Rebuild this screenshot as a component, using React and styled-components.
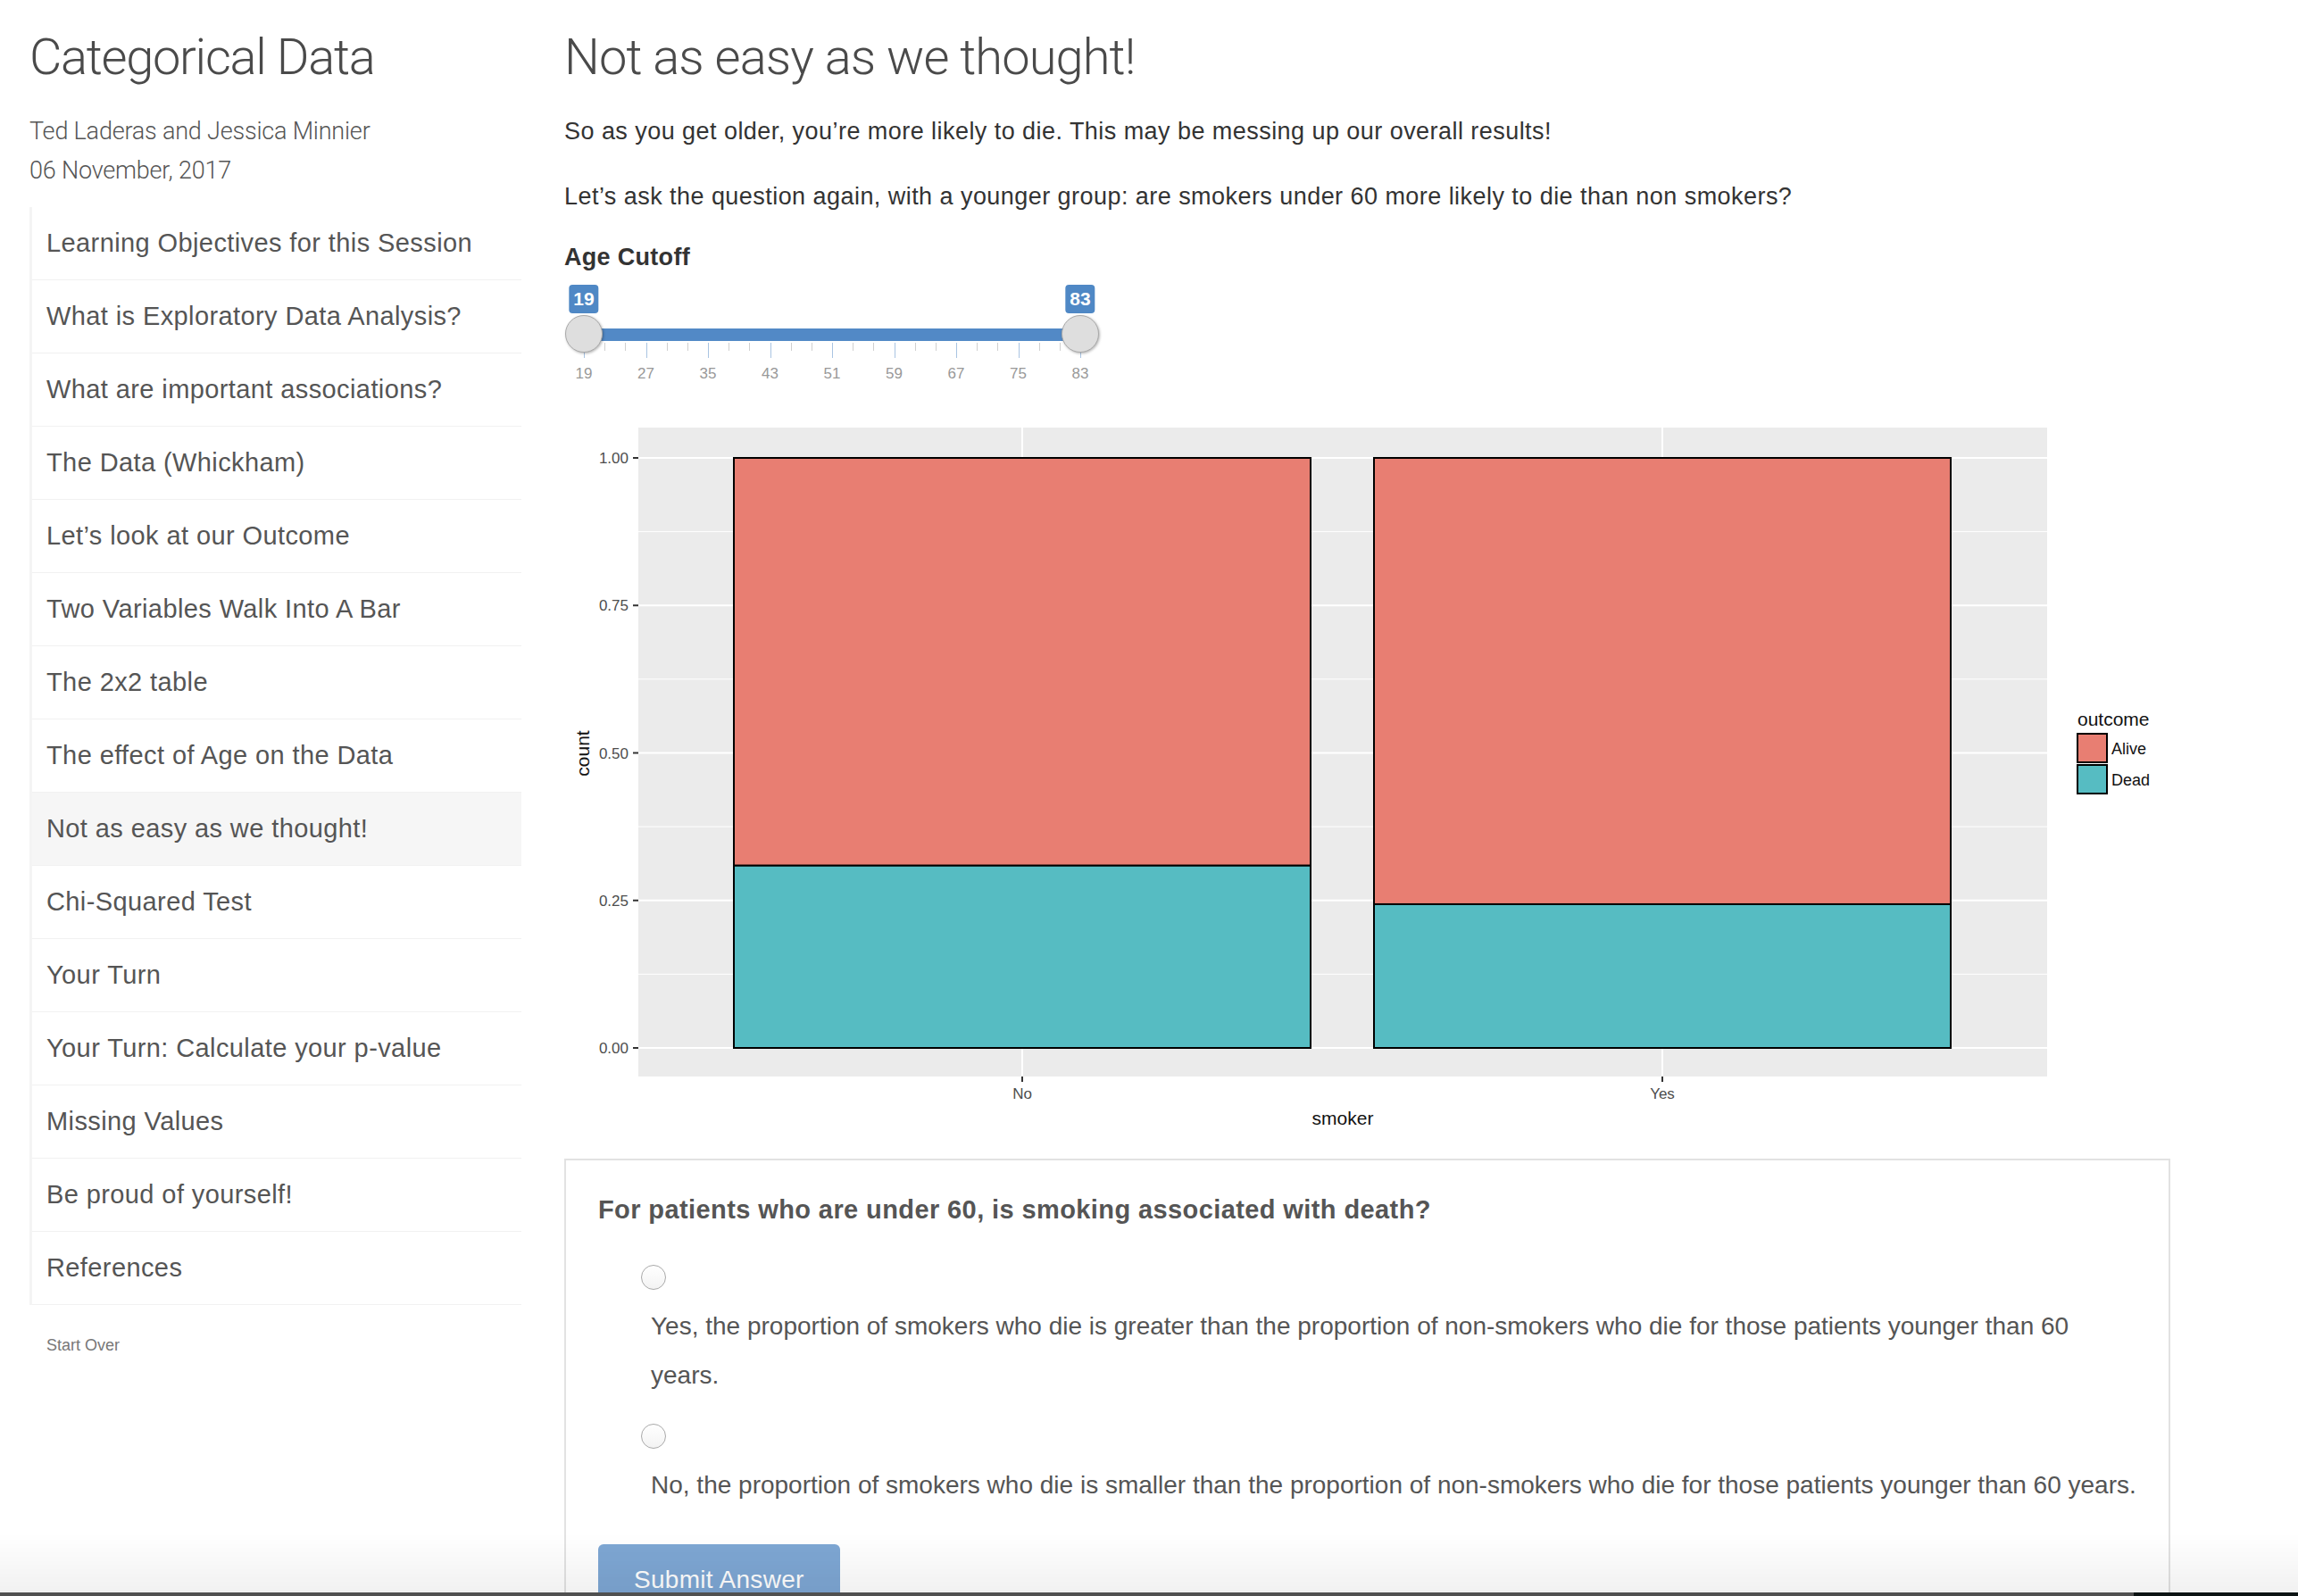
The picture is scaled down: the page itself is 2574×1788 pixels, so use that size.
import React from 'react';
import styled, { createGlobalStyle } from 'styled-components';

const GlobalStyle = createGlobalStyle`
  html, body {
    margin: 0;
    padding: 0;
    background: #fff;
  }
  body {
    font-family: 'Liberation Sans', Arial, sans-serif;
    color: #333;
  }
`;

const sections = [
    'Learning Objectives for this Session',
    'What is Exploratory Data Analysis?',
    'What are important associations?',
    'The Data (Whickham)',
    'Let’s look at our Outcome',
    'Two Variables Walk Into A Bar',
    'The 2x2 table',
    'The effect of Age on the Data',
    'Not as easy as we thought!',
    'Chi-Squared Test',
    'Your Turn',
    'Your Turn: Calculate your p-value',
    'Missing Values',
    'Be proud of yourself!',
    'References',
];

const ALIVE = '#e87e72';
const DEAD = '#56bcc2';

// proportions of deaths per smoker group (age 19 - 83)
const bars = [
    { name: 'No', x: 190, center: 513, dead: 0.309 },
    { name: 'Yes', x: 907, center: 1230, dead: 0.2436 },
];

const Page = styled.div`
  display: flex;
  height: 1788px;
  overflow: hidden;
  padding-left: 33px;
  box-sizing: border-box;
`;

const Sidebar = styled.aside`
  width: 551px;
  flex-shrink: 0;
`;

const Title = styled.h1`
  margin: 33px 0 0;
  font-family: Roboto, 'Liberation Sans', sans-serif;
  font-weight: 300;
  font-size: 56px;
  line-height: 62px;
  letter-spacing: -1.3px;
  color: #4a4a4a;
  white-space: nowrap;
`;

const Byline = styled.div`
  margin-top: 30px;
  font-family: Roboto, 'Liberation Sans', sans-serif;
  font-weight: 300;
  font-size: 27px;
  line-height: 44px;
  letter-spacing: -0.2px;
  color: #555;
`;

const NavList = styled.ul`
  list-style: none;
  margin: 19px 0 0;
  padding: 0;
  border-left: 3px solid #f4f4f4;
`;

const NavItem = styled.li`
  padding: 20px 0 21px 16px;
  font-size: 29px;
  line-height: 40px;
  letter-spacing: 0.4px;
  color: #555;
  white-space: nowrap;
  border-bottom: 1px solid #f1f1f1;
  background: ${(p) => (p.$active ? '#f6f6f6' : 'transparent')};
`;

const StartOver = styled.div`
  margin: 32px 0 0 19px;
  font-size: 18px;
  line-height: 26px;
  color: #777;
`;

const Main = styled.main`
  margin-left: 48px;
  width: 1799px;
  flex-shrink: 0;
`;

const Heading = styled.h2`
  margin: 33px 0 32px;
  font-family: Roboto, 'Liberation Sans', sans-serif;
  font-weight: 300;
  font-size: 56px;
  line-height: 62px;
  letter-spacing: -0.9px;
  color: #4a4a4a;
`;

const Para = styled.p`
  margin: 0 0 33px;
  font-size: 27px;
  line-height: 40px;
  letter-spacing: 0.45px;
  color: #333;
`;

const InputLabel = styled.div`
  font-weight: bold;
  font-size: 27px;
  line-height: 31px;
  letter-spacing: 0.3px;
  color: #333;
`;

/* ---------- range slider ---------- */

const SLIDER_MIN = 19;
const SLIDER_MAX = 83;
const pos = (v) => 22 + ((v - SLIDER_MIN) / (SLIDER_MAX - SLIDER_MIN)) * 556;

const SliderWrap = styled.div`
  position: relative;
  width: 600px;
  height: 112px;
  margin-top: 15px;
`;

const ValueTag = styled.span`
  position: absolute;
  top: 0;
  transform: translateX(-50%);
  padding: 0 5px;
  border-radius: 4px;
  background: #4f88c5;
  color: #fff;
  font-weight: bold;
  font-size: 21px;
  line-height: 32px;
`;

const Track = styled.div`
  position: absolute;
  top: 49px;
  height: 14px;
  background: #5289c6;
`;

const Handle = styled.div`
  position: absolute;
  top: 34px;
  width: 42px;
  height: 42px;
  margin-left: -21px;
  box-sizing: border-box;
  border-radius: 50%;
  border: 1px solid #aaa;
  background: #dedede;
  box-shadow: 1px 1px 3px rgba(0, 0, 0, 0.3);
`;

const Tick = styled.span`
  position: absolute;
  top: 65px;
  width: 1px;
  height: ${(p) => (p.$major ? 17 : 9)}px;
  background: ${(p) => (p.$major ? '#a9c4e2' : '#d0d0d0')};
`;

const TickLabel = styled.span`
  position: absolute;
  top: 91px;
  transform: translateX(-50%);
  font-size: 17px;
  line-height: 18px;
  color: #999;
`;

function RangeSlider({ from, to }) {
    const ticks = [];
    for (let i = 0; i <= 24; i += 1) {
        ticks.push({ v: SLIDER_MIN + (i * 8) / 3, major: i % 3 === 0 });
    }
    return (
        <SliderWrap>
            {ticks.map((t) => (
                <Tick key={t.v} $major={t.major} style={{ left: pos(t.v) }} />
            ))}
            {ticks.filter((t) => t.major).map((t) => (
                <TickLabel key={`l${t.v}`} style={{ left: pos(t.v) }}>
                    {Math.round(t.v)}
                </TickLabel>
            ))}
            <Track style={{ left: pos(from), width: pos(to) - pos(from) }} />
            <ValueTag style={{ left: pos(from) }}>{from}</ValueTag>
            <ValueTag style={{ left: pos(to) }}>{to}</ValueTag>
            <Handle style={{ left: pos(from) }} />
            <Handle style={{ left: pos(to) }} />
        </SliderWrap>
    );
}

/* ---------- ggplot style bar chart ---------- */

const ChartSvg = styled.svg`
  display: block;
  margin-top: 40px;
  font-family: 'Liberation Sans', Arial, sans-serif;
`;

const y = (v) => 703 - v * 661;

function BarChart() {
    const major = [0, 0.25, 0.5, 0.75, 1];
    const minor = [0.125, 0.375, 0.625, 0.875];
    return (
        <ChartSvg width="1799" height="800" viewBox="0 0 1799 800">
            <rect x="83" y="8" width="1578" height="727" fill="#ebebeb" />
            {minor.map((v) => (
                <line key={v} x1="83" x2="1661" y1={y(v)} y2={y(v)} stroke="#fff" strokeWidth="1" />
            ))}
            {major.map((v) => (
                <line key={v} x1="83" x2="1661" y1={y(v)} y2={y(v)} stroke="#fff" strokeWidth="2" />
            ))}
            {bars.map((b) => (
                <line key={b.name} x1={b.center} x2={b.center} y1="8" y2="735" stroke="#fff" strokeWidth="2" />
            ))}
            {bars.map((b) => (
                <g key={`bar${b.name}`} stroke="#000" strokeWidth="2">
                    <rect x={b.x} y={y(1)} width="646" height={y(b.dead) - y(1)} fill={ALIVE} />
                    <rect x={b.x} y={y(b.dead)} width="646" height={y(0) - y(b.dead)} fill={DEAD} />
                </g>
            ))}
            {major.map((v) => (
                <g key={`t${v}`}>
                    <line x1="77" x2="83" y1={y(v)} y2={y(v)} stroke="#333" strokeWidth="2" />
                    <text x="72" y={y(v) + 6} fontSize="17" fill="#4d4d4d" textAnchor="end">
                        {v.toFixed(2)}
                    </text>
                </g>
            ))}
            {bars.map((b) => (
                <g key={`x${b.name}`}>
                    <line x1={b.center} x2={b.center} y1="735" y2="741" stroke="#333" strokeWidth="2" />
                    <text x={b.center} y="760" fontSize="17" fill="#4d4d4d" textAnchor="middle">
                        {b.name}
                    </text>
                </g>
            ))}
            <text x="872" y="789" fontSize="21" fill="#111" textAnchor="middle">smoker</text>
            <text
                x="0"
                y="0"
                fontSize="21"
                fill="#111"
                textAnchor="middle"
                transform="translate(28 373) rotate(-90)"
            >
                count
            </text>
            <text x="1695" y="342" fontSize="21" fill="#111">outcome</text>
            <rect x="1695" y="351" width="33" height="32" fill={ALIVE} stroke="#000" strokeWidth="2" />
            <rect x="1695" y="386" width="33" height="32" fill={DEAD} stroke="#000" strokeWidth="2" />
            <text x="1733" y="374" fontSize="18" fill="#111">Alive</text>
            <text x="1733" y="409" fontSize="18" fill="#111">Dead</text>
        </ChartSvg>
    );
}

/* ---------- quiz ---------- */

const QuizPanel = styled.section`
  margin-top: 27px;
  border: 2px solid #e2e2e2;
  padding: 35px 12px 60px 36px;
`;

const Question = styled.h3`
  margin: 0;
  font-weight: bold;
  font-size: 29px;
  line-height: 40px;
  letter-spacing: 0.4px;
  color: #555;
`;

const Options = styled.div`
  display: inline-flex;
  flex-direction: column;
  gap: 27px;
  margin-top: 42px;
`;

const Option = styled.label`
  display: block;
  padding-left: 48px;
`;

const Radio = styled.span`
  display: block;
  width: 28px;
  height: 28px;
  box-sizing: border-box;
  border-radius: 50%;
  border: 1px solid #a9a9a9;
  background: linear-gradient(#fff, #f3f3f3);
`;

const OptionText = styled.span`
  display: block;
  box-sizing: border-box;
  margin-top: 13px;
  padding-left: 11px;
  font-size: 28px;
  line-height: 55px;
  color: #555;
  ${(p) => (p.$fill ? 'width: 0; min-width: 100%;' : 'white-space: nowrap;')}
`;

const SubmitButton = styled.button`
  display: block;
  margin-top: 39px;
  padding: 20px 40px 30px;
  border: none;
  border-radius: 6px;
  background: #7ea7d4;
  color: #fff;
  font-family: 'Liberation Sans', Arial, sans-serif;
  font-size: 28px;
  line-height: 40px;
  letter-spacing: 0.3px;
`;

const BottomShade = styled.div`
  position: fixed;
  left: 0;
  right: 0;
  bottom: 0;
  height: 70px;
  pointer-events: none;
  background: linear-gradient(rgba(0, 0, 0, 0), rgba(0, 0, 0, 0.055) 94%, #505050 94%);
  &::after {
    content: '';
    position: absolute;
    right: 0;
    bottom: 0;
    width: 184px;
    height: 4px;
    background: #0b1313;
  }
`;

export default function App() {
    return (
        <>
            <GlobalStyle />
            <Page>
                <Sidebar>
                    <Title>Categorical Data</Title>
                    <Byline>
                        Ted Laderas and Jessica Minnier
                        <br />
                        06 November, 2017
                    </Byline>
                    <NavList>
                        {sections.map((s) => (
                            <NavItem key={s} $active={s === 'Not as easy as we thought!'}>{s}</NavItem>
                        ))}
                    </NavList>
                    <StartOver>Start Over</StartOver>
                </Sidebar>
                <Main>
                    <Heading>Not as easy as we thought!</Heading>
                    <Para>So as you get older, you’re more likely to die. This may be messing up our overall results!</Para>
                    <Para>
                        Let’s ask the question again, with a younger group: are smokers under 60 more likely to
                        die than non smokers?
                    </Para>
                    <InputLabel>Age Cutoff</InputLabel>
                    <RangeSlider from={19} to={83} />
                    <BarChart />
                    <QuizPanel>
                        <Question>For patients who are under 60, is smoking associated with death?</Question>
                        <Options>
                            <Option>
                                <Radio />
                                <OptionText $fill>
                                    Yes, the proportion of smokers who die is greater than the proportion of
                                    non-smokers who die for those patients younger than 60 years.
                                </OptionText>
                            </Option>
                            <Option>
                                <Radio />
                                <OptionText>
                                    No, the proportion of smokers who die is smaller than the proportion of
                                    non-smokers who die for those patients younger than 60 years.
                                </OptionText>
                            </Option>
                        </Options>
                        <SubmitButton type="button">Submit Answer</SubmitButton>
                    </QuizPanel>
                </Main>
            </Page>
            <BottomShade />
        </>
    );
}
